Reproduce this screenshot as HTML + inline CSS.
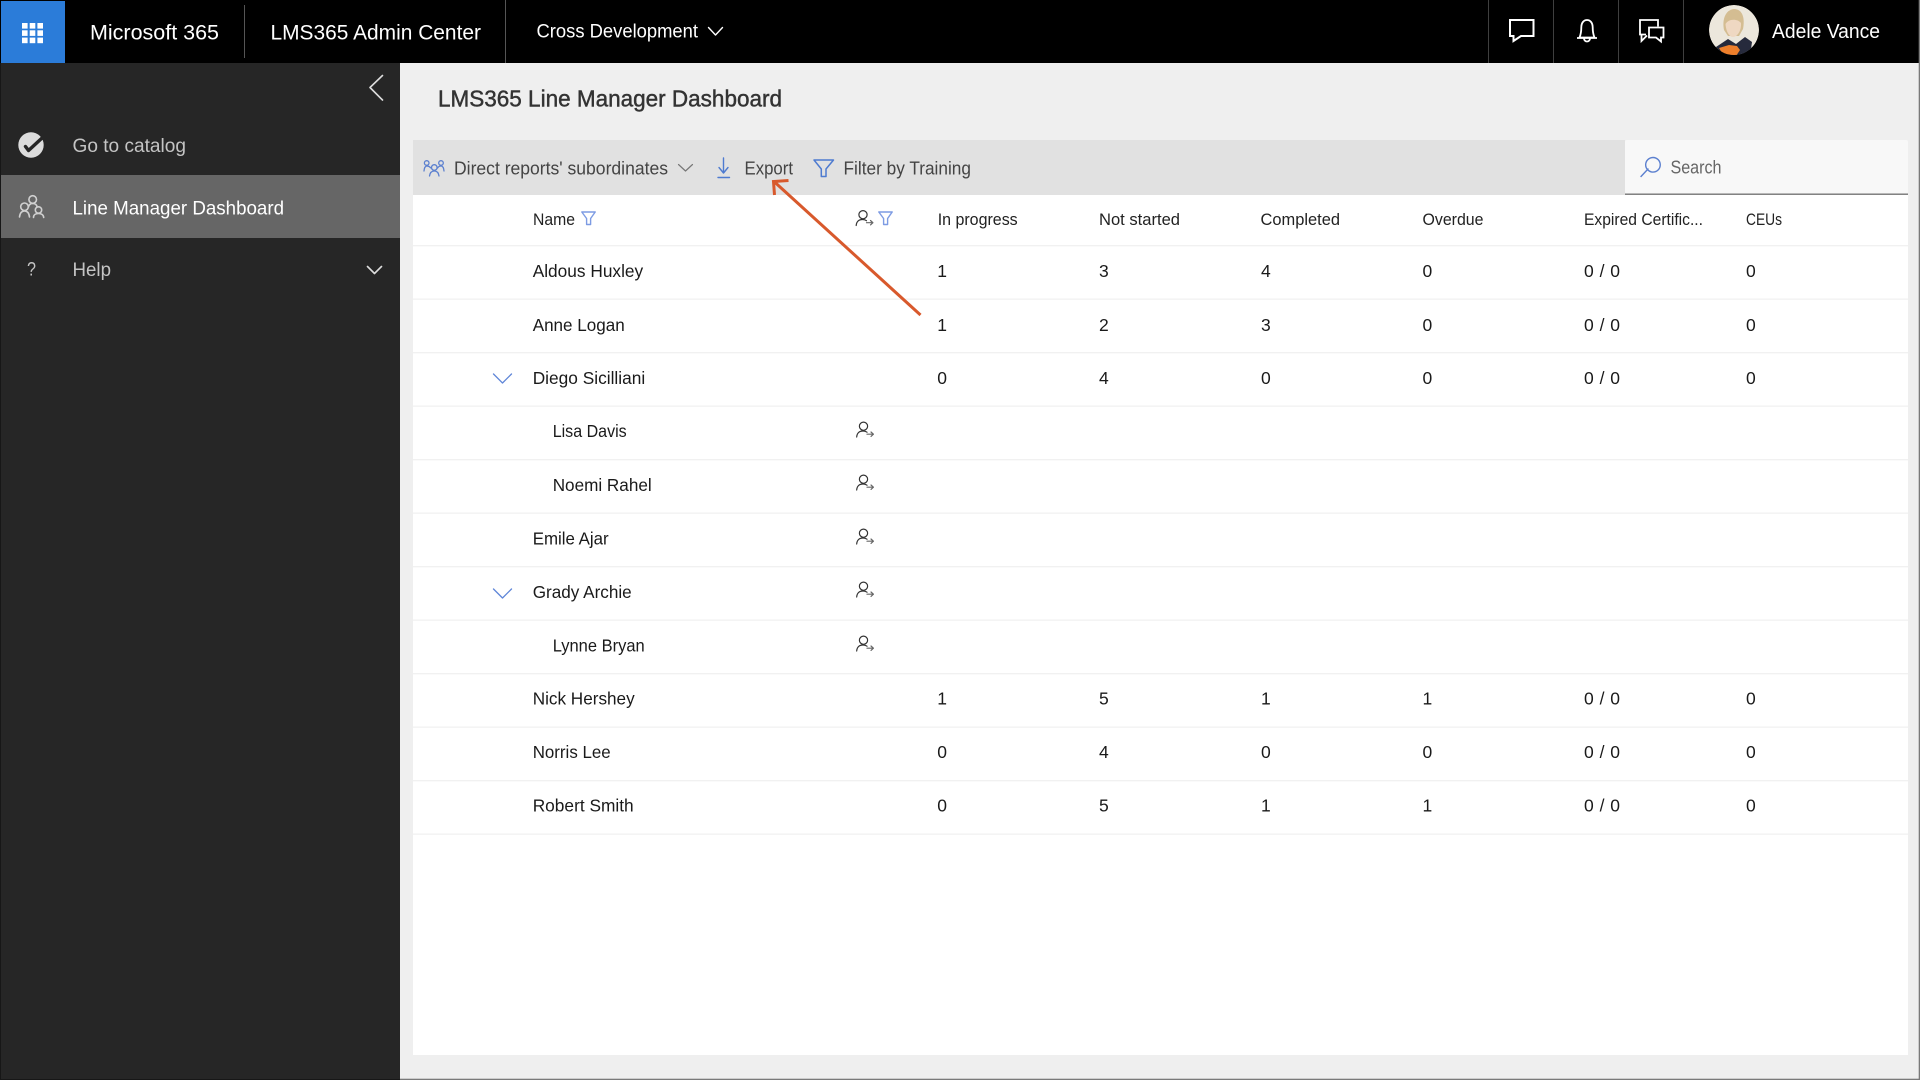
<!DOCTYPE html>
<html lang="en"><head><meta charset="utf-8"><title>LMS365 Line Manager Dashboard</title>
<style>
html,body{margin:0;padding:0;width:1920px;height:1080px;overflow:hidden;background:#efefef}
svg{display:block}
text{font-family:"Liberation Sans",sans-serif;white-space:pre}
.r{font-size:17.5px;fill:#1a1a1a}
.h{font-size:16.5px;fill:#222}
.t{font-size:18px;fill:#444}
.w{fill:#fff}
.s{font-size:19.5px;fill:#c4c4c4}
.ic{fill:none;stroke-linecap:round;stroke-linejoin:round}
</style></head><body>
<svg width="1920" height="1080" viewBox="0 0 1920 1080" xmlns="http://www.w3.org/2000/svg">
<defs>
<g id="pa" class="ic"><circle cx="7.5" cy="5.2" r="4.1" stroke="#333" stroke-width="1.2"/><path d="M.7 16C1 12 3.5 10 7 10c1.5 0 3 .4 4 1.2" stroke="#333" stroke-width="1.2"/><path d="M11 13.2h6.4M15 11l2.4 2.2L15 15.4" stroke="#666" stroke-width="1.2"/></g>
<g id="fl" class="ic"><path d="M.8 1H14.2L9.6 7.5V13.5H5.6V7.5Z" stroke="#7d9be3" stroke-width="1.4"/></g>
<g id="cv" class="ic"><path d="M.5 .5L9.5 9.5 18.5 .5" stroke="#5f86d8" stroke-width="1.3"/></g>
<clipPath id="av"><circle cx="1734" cy="30" r="25"/></clipPath>
</defs>

<rect width="1920" height="1080" fill="#efefef"/>
<!-- top bar -->
<rect width="1920" height="63" fill="#000"/>
<rect x="1" y="1" width="64" height="62" fill="#2b7cd9"/>
<g fill="#fff">
<rect x="22" y="23" width="5.6" height="5.6"/><rect x="29.7" y="23" width="5.6" height="5.6"/><rect x="37.4" y="23" width="5.6" height="5.6"/>
<rect x="22" y="30.3" width="5.6" height="5.6"/><rect x="29.7" y="30.3" width="5.6" height="5.6"/><rect x="37.4" y="30.3" width="5.6" height="5.6"/>
<rect x="22" y="37.6" width="5.6" height="5.6"/><rect x="29.7" y="37.6" width="5.6" height="5.6"/><rect x="37.4" y="37.6" width="5.6" height="5.6"/>
</g>
<text x="90" y="39.5" class="w" font-size="21" textLength="129" lengthAdjust="spacingAndGlyphs">Microsoft 365</text>
<rect x="244" y="5" width="1" height="53" fill="#555"/>
<text x="270.5" y="39.5" class="w" font-size="21" textLength="210.5" lengthAdjust="spacingAndGlyphs">LMS365 Admin Center</text>
<rect x="505" y="0" width="1" height="63" fill="#555"/>
<text x="536.5" y="37.5" class="w" font-size="19.5" textLength="161.5" lengthAdjust="spacingAndGlyphs">Cross Development</text>
<path class="ic" d="M708.5 27.5L715.5 35 722.5 27.5" stroke="#fff" stroke-width="1.4"/>
<rect x="1488" y="0" width="1" height="63" fill="#3f3f3f"/><rect x="1553" y="0" width="1" height="63" fill="#3f3f3f"/><rect x="1618" y="0" width="1" height="63" fill="#3f3f3f"/><rect x="1683" y="0" width="1" height="63" fill="#3f3f3f"/>
<path d="M1510 20H1533.5V36H1521L1513.5 41V36H1510Z" fill="none" stroke="#fff" stroke-width="2"/>
<path d="M1579.5 37.5C1581 34 1581.3 31 1581.3 27.5 1581.3 22.5 1584 20 1587 20S1592.7 22.5 1592.7 27.5C1592.7 31 1593 34 1594.5 37.5ZM1577 38H1597M1584 38.5A3 3 0 0 0 1590 38.5" fill="none" stroke="#fff" stroke-width="1.8"/>
<path d="M1646 34.5H1640V20H1658V26.5M1641.5 34.5V41L1647 35.5" fill="none" stroke="#fff" stroke-width="1.8"/>
<path d="M1649 27.5H1663.5V37.5H1661V41.5L1656 37.5H1649Z" fill="none" stroke="#fff" stroke-width="1.8"/>
<g clip-path="url(#av)">
<circle cx="1734" cy="30" r="25" fill="#ece7dc"/>
<path d="M1724 30C1722 20 1725 10 1734 9 1743 9 1745 19 1743 29L1739 36H1728Z" fill="#d4bd92"/>
<path d="M1725.5 24C1728 19 1737 18 1741 23 1741.5 31 1737 37 1733 37 1729 37 1726 31 1725.5 24Z" fill="#efd8c2"/>
<path d="M1716 47L1728 39 1736 44 1745 37 1752 42 1750 56H1720Z" fill="#262a3c"/>
<path d="M1719 48L1729 45 1737 46 1740 50 1736 56H1724Z" fill="#ee7f2b"/>
</g>
<text x="1772" y="38" class="w" font-size="20" textLength="108" lengthAdjust="spacingAndGlyphs">Adele Vance</text>

<!-- sidebar -->
<rect x="0" y="63" width="400" height="1017" fill="#262626"/>
<rect x="0" y="63" width="1" height="1017" fill="#171717"/>
<rect x="0" y="1079" width="400" height="1" fill="#171717"/>
<rect x="1" y="175" width="399" height="63" fill="#666"/>
<path class="ic" d="M382.5 75.5L370 87.5 382.5 100" stroke="#ddd" stroke-width="1.6"/>
<circle cx="31" cy="145" r="12.7" fill="#dcdcdc"/>
<path class="ic" d="M25.5 146.5L28.5 150.5 41.5 138.5" stroke="#262626" stroke-width="3.4"/>
<text x="72.5" y="152" class="s" textLength="113.5" lengthAdjust="spacingAndGlyphs">Go to catalog</text>
<g class="ic" stroke="#d0d0d0" stroke-width="1.6">
<circle cx="32.7" cy="199.5" r="3.8"/><circle cx="24.5" cy="206.8" r="3.8"/><circle cx="38.5" cy="210" r="3.2"/>
<path d="M19.5 217C20 212.5 22 211 24.5 211S29 212.5 29.5 217M28.5 207C29 204.5 30.5 203.5 32.7 203.5S36.5 204.5 37 206.5M33.5 217.5C33.5 215 35.5 213.5 38.5 213.5S43.5 215 43.7 217.5"/>
</g>
<text x="72.5" y="214.7" class="w" font-size="19.5" textLength="211.5" lengthAdjust="spacingAndGlyphs">Line Manager Dashboard</text>
<text x="27" y="275.5" font-size="19" fill="#c4c4c4" textLength="9" lengthAdjust="spacingAndGlyphs">?</text>
<text x="72.5" y="276" class="s" textLength="38.5" lengthAdjust="spacingAndGlyphs">Help</text>
<path class="ic" d="M367.5 266.5L374.5 273.5 381.5 266.5" stroke="#ddd" stroke-width="1.6"/>

<!-- main -->
<text x="438" y="106.5" font-size="23" fill="#333" stroke="#333" stroke-width=".45" textLength="344" lengthAdjust="spacingAndGlyphs">LMS365 Line Manager Dashboard</text>
<rect x="413" y="195" width="1495" height="860" fill="#fff"/>
<rect x="413" y="140" width="1212" height="55" fill="#e1e1e1"/>
<rect x="1625" y="140" width="283" height="54" rx="2" fill="#f8f8f8"/>
<rect x="1625" y="193.5" width="283" height="1.4" fill="#777"/>

<!-- toolbar -->
<g class="ic" stroke="#5c80cf" stroke-width="1.3">
<circle cx="426.7" cy="163" r="2.3"/><circle cx="441" cy="163" r="2.3"/><circle cx="434.3" cy="167.5" r="2.8"/>
<path d="M424 171C424.3 167.5 425.5 166 427 166S429.5 166.5 431 168M444 171C443.7 167.5 442.5 166 441 166S438.5 166.5 437.5 168M429.5 176C430 172.5 432 171 434.3 171S438.5 172.5 439 176"/>
</g>
<text x="454" y="174.5" class="t" textLength="214" lengthAdjust="spacingAndGlyphs">Direct reports' subordinates</text>
<path class="ic" d="M678.5 164.5L685.5 171 692.5 164.5" stroke="#777" stroke-width="1.2"/>
<path class="ic" d="M723.5 158V173M719 167.5L723.5 173 728 167.5M718 177.5H729.5" stroke="#4e7bd0" stroke-width="1.4"/>
<text x="744.5" y="174.5" class="t" textLength="48.5" lengthAdjust="spacingAndGlyphs">Export</text>
<path class="ic" d="M814 160H833.5L826 169V176.5H821.3V169Z" stroke="#4e7bd0" stroke-width="1.5"/>
<text x="843.5" y="174.5" class="t" textLength="127.5" lengthAdjust="spacingAndGlyphs">Filter by Training</text>
<path class="ic" d="M1641 176.5L1648 169M1653 157.5A7.3 7.3 0 1 1 1652.9 172.1 7.3 7.3 0 0 1 1653 157.5Z" stroke="#5c80cf" stroke-width="1.4"/>
<text x="1670.5" y="173.5" font-size="18" fill="#666" textLength="51" lengthAdjust="spacingAndGlyphs">Search</text>

<!-- table header -->
<text x="533" y="225" class="h" textLength="42" lengthAdjust="spacingAndGlyphs">Name</text>
<use href="#fl" x="581" y="211"/>
<use href="#pa" x="855.5" y="209.5"/>
<use href="#fl" x="878" y="211"/>
<text x="937.7" y="225" class="h" textLength="80" lengthAdjust="spacingAndGlyphs">In progress</text>
<text x="1099" y="225" class="h" textLength="81" lengthAdjust="spacingAndGlyphs">Not started</text>
<text x="1260.5" y="225" class="h" textLength="79.5" lengthAdjust="spacingAndGlyphs">Completed</text>
<text x="1422.5" y="225" class="h" textLength="61" lengthAdjust="spacingAndGlyphs">Overdue</text>
<text x="1584" y="225" class="h" textLength="119" lengthAdjust="spacingAndGlyphs">Expired Certific...</text>
<text x="1746" y="225" class="h" textLength="36" lengthAdjust="spacingAndGlyphs">CEUs</text>

<!-- row lines -->
<g fill="#f1f1f1">
<rect x="413" y="245" width="1495" height="1.3"/><rect x="413" y="298.5" width="1495" height="1.3"/><rect x="413" y="352" width="1495" height="1.3"/><rect x="413" y="405.5" width="1495" height="1.3"/><rect x="413" y="459" width="1495" height="1.3"/><rect x="413" y="512.5" width="1495" height="1.3"/><rect x="413" y="566" width="1495" height="1.3"/><rect x="413" y="619.5" width="1495" height="1.3"/><rect x="413" y="673" width="1495" height="1.3"/><rect x="413" y="726.5" width="1495" height="1.3"/><rect x="413" y="780" width="1495" height="1.3"/><rect x="413" y="833.5" width="1495" height="1.3"/>
</g>

<!-- names -->
<text x="532.7" y="277" class="r" textLength="110.5" lengthAdjust="spacingAndGlyphs">Aldous Huxley</text>
<text x="532.7" y="331" class="r" textLength="92" lengthAdjust="spacingAndGlyphs">Anne Logan</text>
<text x="532.7" y="384" class="r" textLength="112.5" lengthAdjust="spacingAndGlyphs">Diego Sicilliani</text>
<text x="552.7" y="437" class="r" textLength="74" lengthAdjust="spacingAndGlyphs">Lisa Davis</text>
<text x="552.7" y="491" class="r" textLength="99" lengthAdjust="spacingAndGlyphs">Noemi Rahel</text>
<text x="532.7" y="544.5" class="r" textLength="76" lengthAdjust="spacingAndGlyphs">Emile Ajar</text>
<text x="532.7" y="598" class="r" textLength="99" lengthAdjust="spacingAndGlyphs">Grady Archie</text>
<text x="552.7" y="651.5" class="r" textLength="92" lengthAdjust="spacingAndGlyphs">Lynne Bryan</text>
<text x="532.7" y="704.5" class="r" textLength="102" lengthAdjust="spacingAndGlyphs">Nick Hershey</text>
<text x="532.7" y="758" class="r" textLength="78" lengthAdjust="spacingAndGlyphs">Norris Lee</text>
<text x="532.7" y="811.5" class="r" textLength="101" lengthAdjust="spacingAndGlyphs">Robert Smith</text>

<use href="#cv" x="493" y="373.5"/>
<use href="#cv" x="493" y="588.5"/>
<use href="#pa" x="856" y="421"/>
<use href="#pa" x="856" y="474"/>
<use href="#pa" x="856" y="528"/>
<use href="#pa" x="856" y="581"/>
<use href="#pa" x="856" y="635"/>

<!-- numbers -->
<g class="r">
<text x="937.3" y="277" class="r">1</text><text x="1099" y="277" class="r">3</text><text x="1261" y="277" class="r">4</text><text x="1422.5" y="277" class="r">0</text><text x="1584" y="277" class="r" textLength="36">0 / 0</text><text x="1746" y="277" class="r">0</text>
<text x="937.3" y="331" class="r">1</text><text x="1099" y="331" class="r">2</text><text x="1261" y="331" class="r">3</text><text x="1422.5" y="331" class="r">0</text><text x="1584" y="331" class="r" textLength="36">0 / 0</text><text x="1746" y="331" class="r">0</text>
<text x="937.3" y="384" class="r">0</text><text x="1099" y="384" class="r">4</text><text x="1261" y="384" class="r">0</text><text x="1422.5" y="384" class="r">0</text><text x="1584" y="384" class="r" textLength="36">0 / 0</text><text x="1746" y="384" class="r">0</text>
<text x="937.3" y="704.5" class="r">1</text><text x="1099" y="704.5" class="r">5</text><text x="1261" y="704.5" class="r">1</text><text x="1422.5" y="704.5" class="r">1</text><text x="1584" y="704.5" class="r" textLength="36">0 / 0</text><text x="1746" y="704.5" class="r">0</text>
<text x="937.3" y="758" class="r">0</text><text x="1099" y="758" class="r">4</text><text x="1261" y="758" class="r">0</text><text x="1422.5" y="758" class="r">0</text><text x="1584" y="758" class="r" textLength="36">0 / 0</text><text x="1746" y="758" class="r">0</text>
<text x="937.3" y="811.5" class="r">0</text><text x="1099" y="811.5" class="r">5</text><text x="1261" y="811.5" class="r">1</text><text x="1422.5" y="811.5" class="r">1</text><text x="1584" y="811.5" class="r" textLength="36">0 / 0</text><text x="1746" y="811.5" class="r">0</text>
</g>

<!-- annotation arrow -->
<path d="M920.5 315L774 181.5M788.5 180.5L773.5 181.5 774.5 195" fill="none" stroke="#d8592c" stroke-width="3"/>

<!-- frame -->
<rect x="1918.7" y="0" width="1.3" height="1080" fill="#7a7a7a"/>
<rect x="400" y="1078.7" width="1520" height="1.3" fill="#7a7a7a"/>
</svg>
</body></html>
